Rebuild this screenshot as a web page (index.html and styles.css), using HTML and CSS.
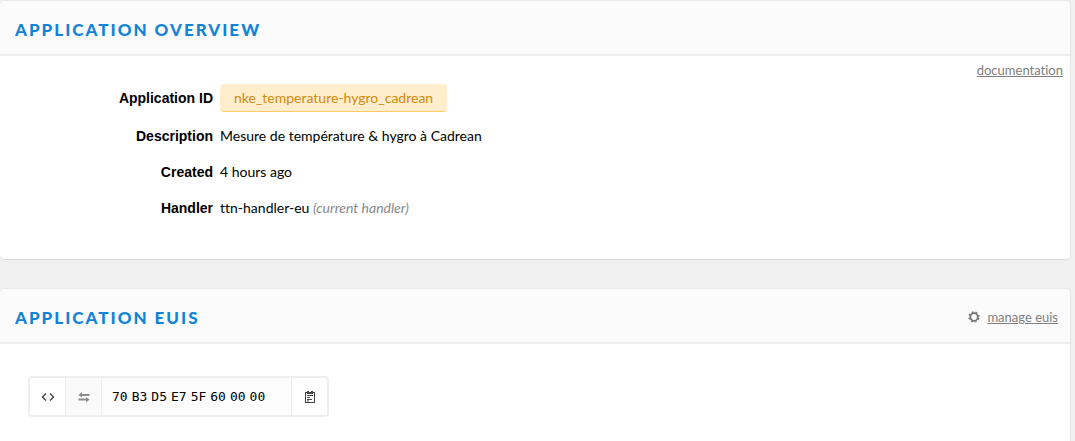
FILE: index.html
```
<!DOCTYPE html>
<html lang="en">
<head>
    <meta charset="UTF-8">
    <meta name="viewport" content="width=device-width, initial-scale=1.0">
    <title>Application Overview</title>
    <link rel="stylesheet" href="styles.css">
</head>
<body>

    <section class="card">
        <div class="card-header">
            <h2>Application Overview</h2>
        </div>
        <div class="card-body overview">
            <dl class="details">
                <dt>Application ID</dt>
                <dd><span class="app-id">nke_temperature-hygro_cadrean</span></dd>
                <dt>Description</dt>
                <dd>Mesure de température &amp; hygro à Cadrean</dd>
                <dt>Created</dt>
                <dd>4 hours ago</dd>
                <dt>Handler</dt>
                <dd>ttn-handler-eu <em>(current handler)</em></dd>
            </dl>
            <a class="link" href="#">documentation</a>
        </div>
    </section>

    <section class="card">
        <div class="card-header">
            <h2>Application EUIs</h2>
            <div class="manage">
                <svg width="12" height="12" viewBox="0 0 12 12" fill="none" stroke="#777" aria-hidden="true">
                    <circle cx="6" cy="6" r="3.8" stroke-width="1.8"/>
                    <circle cx="6" cy="6" r="5" stroke-width="1.3" stroke-dasharray="1.96 1.96" stroke-dashoffset="-.98"/>
                </svg>
                <a class="link" href="#">manage euis</a>
            </div>
        </div>
        <div class="card-body euis">
            <div class="eui">
                <button type="button" aria-label="Toggle format">
                    <svg width="14" height="12" viewBox="0 0 14 12" fill="none" stroke="#444" stroke-width="1.4" aria-hidden="true">
                        <path d="M5 2.5L1.5 6L5 9.5M9 2.5L12.5 6L9 9.5"/>
                    </svg>
                </button>
                <button type="button" class="muted" aria-label="Swap byte order">
                    <svg width="12" height="12" viewBox="0 0 12 12" fill="#8c8c8c" aria-hidden="true">
                        <path d="M4 1V3H11.5V5H4V6.5L.5 4zM8 6V7.5H.5V9.5H8V11.5L11.5 8.5z"/>
                    </svg>
                </button>
                <code><span>70</span><span>B3</span><span>D5</span><span>E7</span><span>5F</span><span>60</span><span>00</span><span>00</span></code>
                <button type="button" aria-label="Copy to clipboard">
                    <svg width="12" height="14" viewBox="0 0 12 14" fill="none" stroke="#444" aria-hidden="true">
                        <rect x="1.5" y="2.5" width="9" height="10"/>
                        <path d="M3 5.5H9M3 7.5H6M3 9.5H8M3 11H5"/>
                        <path d="M3 1H5V2H7V1H9V4H3z" fill="#444" stroke="none"/>
                    </svg>
                </button>
            </div>
        </div>
    </section>

</body>
</html>
```
FILE: styles.css
```
* {
    box-sizing: border-box;
}

body {
    margin: 0;
    padding-right: 4px;
    background-color: #f0f0f0;
    font-family: Lato, sans-serif;
    font-size: 14px;
    line-height: 24px;
    font-variant-ligatures: none;
    color: #000;
}

.card {
    margin-bottom: 28px;
    background: #fff;
    border: 1px solid #e8e8e8;
    border-left: none;
    border-bottom-color: #d8d8d8;
    border-radius: 5px;
}

.card:last-child {
    margin-bottom: 0;
    border-bottom: none;
    border-radius: 5px 5px 0 0;
}

.card-header {
    display: flex;
    align-items: center;
    justify-content: space-between;
    height: 55px;
    padding: 3px 12px 0 15px;
    background: #fbfbfb;
    border-bottom: 2px solid #eee;
    border-radius: 5px 5px 0 0;
}

h2 {
    margin: 0;
    padding-top: 2px;
    font-size: 17px;
    font-weight: 900;
    letter-spacing: 2px;
    text-transform: uppercase;
    color: #1283d6;
}

.link {
    font-size: 13px;
    color: #808080;
}

.manage {
    display: flex;
    align-items: center;
    gap: 7px;
}

.overview {
    display: flex;
    align-items: flex-start;
    justify-content: space-between;
    padding: 2px 7px 39px 0;
}

.details {
    display: grid;
    grid-template-columns: 213px auto;
    gap: 12px 7px;
    margin: 26px 0 0;
}

dt {
    align-self: center;
    font-family: "Liberation Sans", Arial, sans-serif;
    font-weight: bold;
    text-align: right;
}

dd {
    margin: 0;
}

em {
    color: #888;
}

.app-id {
    display: inline-block;
    height: 28px;
    padding: 2px 14px;
    background: #ffedcc;
    border-bottom: 1px solid #ffcb66;
    border-radius: 4px;
    color: #d08b0c;
}

.euis {
    display: flex;
    padding: 32px 28px 24px;
}

.eui {
    display: flex;
    height: 41px;
    border: 2px solid #eee;
    border-radius: 4px;
    overflow: hidden;
}

.eui button {
    display: flex;
    align-items: center;
    justify-content: center;
    width: 35px;
    padding: 0;
    border: none;
    background: #fff;
    cursor: pointer;
}

.eui .muted {
    width: 37px;
    background: #fafafa;
    border: solid #eee;
    border-width: 0 1px;
}

.eui code {
    display: flex;
    align-items: center;
    gap: 4px;
    padding: 0 26px 0 10px;
    background: #fcfcfc;
    border-right: 1px solid #eee;
    font-family: "DejaVu Sans Mono", monospace;
    font-size: 13px;
}
```
